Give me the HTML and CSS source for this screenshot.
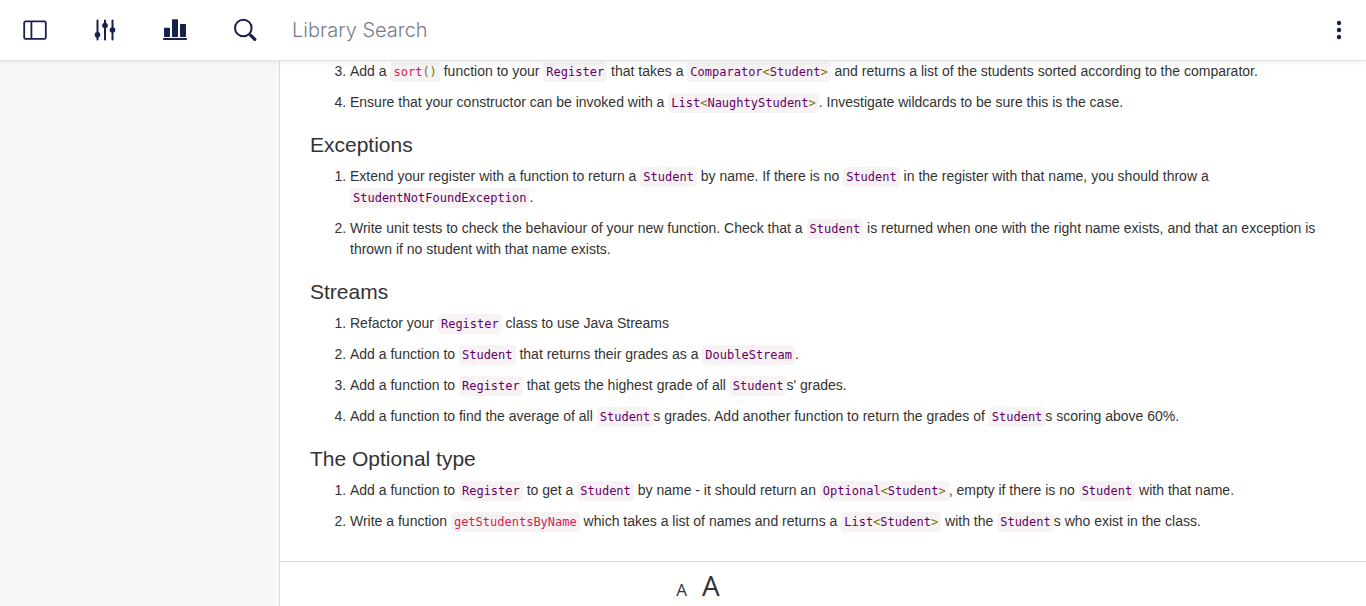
FILE: index.html
```html
<!DOCTYPE html>
<html lang="en">
<head>
<meta charset="utf-8">
<meta name="viewport" content="width=device-width, initial-scale=1">
<title>Library</title>
<link rel="stylesheet" href="styles.css">
</head>
<body>
<header class="topbar">
  <button class="tool" type="button" aria-label="Toggle sidebar">
    <svg class="icon" viewBox="0 0 24 24"><g fill="none" stroke="currentColor" stroke-width="1.8"><rect x="1.2" y="3.4" width="21.6" height="17.4" rx="1.4"/><path d="M8.4 3.4v17.4"/></g></svg>
  </button>
  <button class="tool" type="button" aria-label="Settings">
    <svg class="icon" viewBox="0 0 24 24"><path d="M4.5 2.5v19M12 2.5v19M19.5 2.5v19" stroke="currentColor" stroke-width="2" stroke-linecap="round"/><g fill="currentColor"><circle cx="4.5" cy="16.7" r="2.8"/><circle cx="12" cy="7.5" r="2.8"/><circle cx="19.5" cy="12" r="2.8"/></g></svg>
  </button>
  <button class="tool" type="button" aria-label="Statistics">
    <svg class="icon" viewBox="0 0 24 24"><g fill="currentColor"><rect x="1" y="9.7" width="6" height="9.3" rx=".7"/><rect x="9" y="1.3" width="6" height="17.7" rx=".7"/><rect x="17" y="6" width="6" height="13" rx=".7"/><rect x="0" y="20" width="24" height="2" rx=".8"/></g></svg>
  </button>
  <button class="tool" type="button" aria-label="Search">
    <svg class="icon" viewBox="0 0 24 24"><g fill="none" stroke="currentColor"><circle cx="10.3" cy="10" r="8.3" stroke-width="2"/><path d="M16 15.8l1.8 1.9" stroke-width="2"/><path d="M17.8 17.4l4 3.9" stroke-width="3.2" stroke-linecap="round"/></g></svg>
  </button>
  <input class="search" type="search" placeholder="Library Search" aria-label="Library Search">
  <button class="tool tool-more" type="button" aria-label="More">
    <svg class="icon" viewBox="0 0 24 24" fill="currentColor"><circle cx="12" cy="5" r="2.2"/><circle cx="12" cy="12" r="2.2"/><circle cx="12" cy="19" r="2.2"/></svg>
  </button>
</header>
<div class="workspace">
  <aside class="sidebar"></aside>
  <div class="reader">
    <main class="article">
      <ol start="3">
        <li>Add a <code class="call">sort<i>()</i></code> function to your <code>Register</code> that takes a <code>Comparator<i>&lt;</i>Student<i>&gt;</i></code> and returns a list of the students sorted according to the comparator.</li>
        <li>Ensure that your constructor can be invoked with a <code>List<i>&lt;</i>NaughtyStudent<i>&gt;</i></code>. Investigate wildcards to be sure this is the case.</li>
      </ol>
      <h2>Exceptions</h2>
      <ol>
        <li>Extend your register with a function to return a <code>Student</code> by name. If there is no <code>Student</code> in the register with that name, you should throw a <code>StudentNotFoundException</code>.</li>
        <li>Write unit tests to check the behaviour of your new function. Check that a <code>Student</code> is returned when one with the right name exists, and that an exception is thrown if no student with that name exists.</li>
      </ol>
      <h2>Streams</h2>
      <ol>
        <li>Refactor your <code>Register</code> class to use Java Streams</li>
        <li>Add a function to <code>Student</code> that returns their grades as a <code>DoubleStream</code>.</li>
        <li>Add a function to <code>Register</code> that gets the highest grade of all <code>Student</code>s' grades.</li>
        <li>Add a function to find the average of all <code>Student</code>s grades. Add another function to return the grades of <code>Student</code>s scoring above 60%.</li>
      </ol>
      <h2>The Optional type</h2>
      <ol>
        <li>Add a function to <code>Register</code> to get a <code>Student</code> by name - it should return an <code>Optional<i>&lt;</i>Student<i>&gt;</i></code>, empty if there is no <code>Student</code> with that name.</li>
        <li>Write a function <code class="call">getStudentsByName</code> which takes a list of names and returns a <code>List<i>&lt;</i>Student<i>&gt;</i></code> with the <code>Student</code>s who exist in the class.</li>
      </ol>
    </main>
    <footer class="text-size">
      <button class="size size-small" type="button" aria-label="Smaller text">A</button>
      <button class="size size-large" type="button" aria-label="Larger text">A</button>
    </footer>
  </div>
</div>
</body>
</html>
```
FILE: styles.css
```css
* { box-sizing: border-box; }
body {
  margin: 0;
  height: 100vh;
  display: flex;
  flex-direction: column;
  overflow: hidden;
  background: #fff;
  color: #333;
  font: 14px/21px "Liberation Sans", Arial, sans-serif;
}
button { padding: 0; border: 0; background: none; cursor: pointer; }

.topbar {
  flex: none;
  z-index: 1;
  display: flex;
  align-items: stretch;
  height: 61px;
  border-bottom: 1px solid #e2e2e4;
  background: #fff;
  box-shadow: 0 1px 6px rgba(0, 0, 0, .08);
}
.tool {
  flex: none;
  width: 70px;
  display: flex;
  align-items: center;
  justify-content: center;
  color: #16204f;
}
.tool-more { width: 54px; }
.icon { width: 24px; height: 24px; display: block; }
.search {
  flex: 1;
  min-width: 0;
  padding: 0 12px;
  border: 0;
  outline: 0;
  background: none;
  font: 300 20px Inter, sans-serif;
  color: #16204f;
  appearance: none;
}
.search::placeholder { color: #777c8c; opacity: 1; }

.workspace { flex: 1; min-height: 0; display: flex; }
.sidebar {
  flex: none;
  width: 280px;
  border-right: 1px solid #d9dadc;
  background: #f6f8fa;
}
.reader { flex: 1; min-width: 0; display: flex; flex-direction: column; }
.article { flex: 1; min-height: 0; overflow: hidden; padding: 0 30px; }

h2 { margin: 19px 0 9px; font-size: 21px; line-height: 25px; font-weight: 400; }
ol { margin: 0; padding-left: 40px; }
li { margin-bottom: 10px; }
code {
  padding: 3px;
  border-radius: 4px;
  background: #f7f2f4;
  color: #606;
  font: 12px "DejaVu Sans Mono", monospace;
}
code i { font-style: normal; color: #770; }
code.call { color: #d1254f; }

.text-size {
  flex: none;
  display: flex;
  align-items: baseline;
  justify-content: center;
  gap: 15px;
  height: 45px;
  padding: 4px 250px 0 0;
  border-top: 1px solid #d9dadc;
}
.size { color: #333; font-family: "Open Sans", sans-serif; }
.size-small { font-size: 17px; }
.size-large { font-size: 28px; }
```
